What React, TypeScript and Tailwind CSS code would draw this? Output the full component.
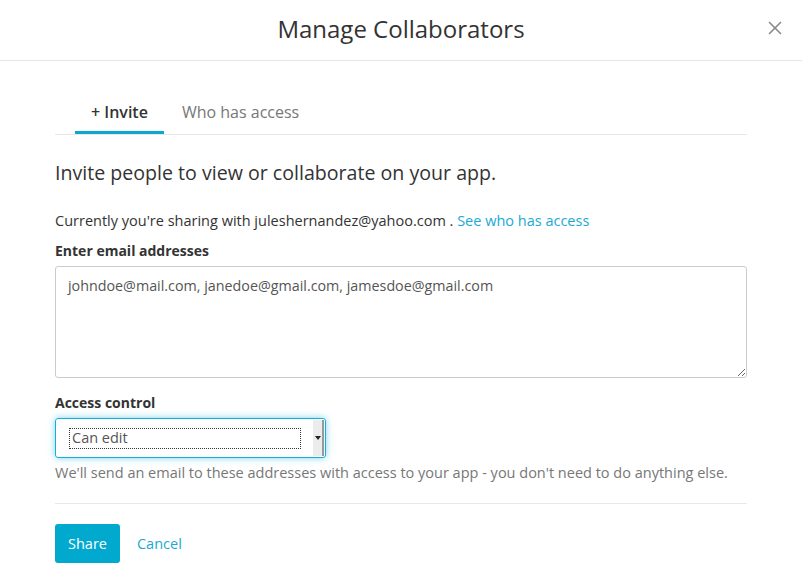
import { X } from 'lucide-react'

export default function App() {
  return (
    <div className="w-[802px] h-[581px] bg-white text-[#333] overflow-hidden" style={{ fontFamily: '"Open Sans", sans-serif' }}>
      {/* Header */}
      <div className="h-[61px] border-b border-[#e5e5e5] flex items-center justify-center relative">
        <h1 className="text-[24px] text-[#333] leading-none -mt-[3px]">Manage Collaborators</h1>
        <button className="absolute right-[16px] top-[17px] text-[#8a8a8a]">
          <X className="w-[22px] h-[22px]" strokeWidth={1.8} />
        </button>
      </div>

      <div className="px-[55px]">
        {/* Tabs */}
        <div className="mt-[37px] flex border-b border-[#e8e8e8] h-[37px]">
          <div className="ml-[20px] px-[16px] h-full border-b-[3px] border-[#0aa8d0] text-[16px] font-semibold text-[#333] leading-[28px] -mb-px">
            + Invite
          </div>
          <div className="px-[18px] text-[16px] text-[#777] leading-[28px]">Who has access</div>
        </div>

        <p className="mt-[24px] text-[19.6px] text-[#333] leading-[28px]">Invite people to view or collaborate on your app.</p>

        <p className="mt-[24px] text-[14.5px] text-[#333] leading-[20px]">
          Currently you're sharing with juleshernandez@yahoo.com . <a className="text-[#1aa9d4]">See who has access</a>
        </p>

        <label className="block mt-[10px] text-[14px] font-bold text-[#333] leading-[20px]">Enter email addresses</label>
        <textarea
          className="mt-[5px] block w-full h-[112px] border border-[#ccc] rounded-[3px] px-[12px] py-[9px] text-[14.3px] text-[#555] leading-[20px] outline-none"
          defaultValue="johndoe@mail.com, janedoe@gmail.com, jamesdoe@gmail.com"
        />

        <label className="block mt-[15px] text-[14px] font-bold text-[#333] leading-[20px]">Access control</label>
        <div className="mt-[5px] w-[271px] h-[40px] border border-[#10b0da] rounded-[3px] shadow-[0_0_7px_rgba(16,176,218,0.55)] flex items-center pl-[13px] pr-[1px]">
          <div className="flex-1 h-[21px] border border-dotted border-[#333] flex items-center px-[2px] text-[14.5px] text-[#555]">Can edit</div>
          <div className="ml-[12px] w-[11px] h-[36px] bg-[#ececec] border-r-2 border-[#999] flex items-center justify-center">
            <div className="w-0 h-0 border-l-[3px] border-r-[3px] border-t-[4px] border-l-transparent border-r-transparent border-t-[#222]" />
          </div>
        </div>

        <p className="mt-[5px] text-[14.5px] text-[#777] leading-[20px]">
          We'll send an email to these addresses with access to your app - you don't need to do anything else.
        </p>

        <div className="mt-[20px] border-t border-[#e8e8e8]" />

        <div className="mt-[20px] flex items-center gap-[17px]">
          <button className="h-[39px] px-[13px] rounded-[3px] bg-[#02a9cf] text-white text-[14.5px]">Share</button>
          <a className="text-[14.5px] text-[#1aa9d4]">Cancel</a>
        </div>
      </div>
    </div>
  )
}
